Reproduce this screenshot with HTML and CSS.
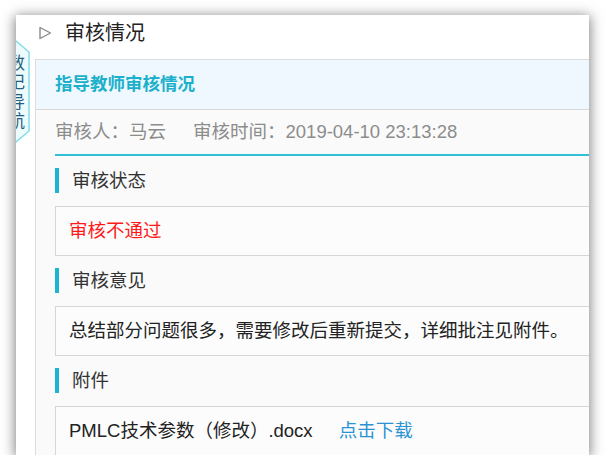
FILE: index.html
```html
<!DOCTYPE html>
<html lang="zh-CN">
<head>
<meta charset="utf-8">
<title>审核情况</title>
<link rel="stylesheet" href="styles.css">
</head>
<body>
<div class="window">
  <div class="title-row">
    <svg class="tri" width="14" height="14" viewBox="0 0 14 14"><path d="M2 1.5 L12.5 7 L2 12.5 Z" fill="none" stroke="#8a8a8a" stroke-width="1.4" stroke-linejoin="round"/></svg>
    <span class="title">审核情况</span>
  </div>
  <div class="panel">
    <div class="panel-head">指导教师审核情况</div>
    <div class="panel-body">
      <div class="info">审核人：马云<span class="gap">审核时间：2019-04-10 23:13:28</span></div>
      <div class="sec-title">审核状态</div>
      <div class="box"><span class="fail">审核不通过</span></div>
      <div class="sec-title">审核意见</div>
      <div class="box">总结部分问题很多，需要修改后重新提交，详细批注见附件。</div>
      <div class="sec-title">附件</div>
      <div class="box">PMLC技术参数（修改）.docx<a class="dl" href="#">点击下载</a></div>
    </div>
  </div>
  <div class="nav-tab">
    <svg class="tab-shape" width="30" height="104" viewBox="0 0 30 104"><polygon points="0,1 16,1 29,12 29,91 16,102 0,102" fill="#eefbfd" stroke="#86dbea" stroke-width="1.5"/></svg>
    <div class="tab-text">数记导航</div>
  </div>
</div>
</body>
</html>
```
FILE: styles.css
```css
html, body {
  margin: 0;
  padding: 0;
  background: #ffffff;
}
body {
  font-family: "Liberation Sans", "Noto Sans CJK SC", sans-serif;
  color: #222;
}
.window {
  position: relative;
  margin: 15px 0 0 16px;
  width: 573px;
  height: 440px;
  background: #ffffff;
  overflow: hidden;
  box-shadow: 0 2px 12px 1px rgba(0, 0, 0, 0.5);
}
.title-row {
  display: flex;
  align-items: center;
  height: 24px;
  padding: 6px 0 0 22px;
  margin-bottom: 14px;
}
.tri {
  display: block;
  margin-right: 13px;
}
.title {
  font-size: 20px;
  line-height: 24px;
  color: #222;
}
.panel {
  margin-left: 19px;
  width: 580px;
  height: 400px;
  border-left: 1px solid #dddddd;
  border-top: 1px solid #dddddd;
  background: #fafafa;
}
.panel-head {
  height: 49px;
  line-height: 49px;
  padding-left: 19px;
  background: #eef8fe;
  border-bottom: 1px solid #d8d8d8;
  color: #1cb0cb;
  font-size: 17.5px;
  font-weight: bold;
}
.panel-body {
  padding-left: 19px;
}
.info {
  height: 44px;
  line-height: 44px;
  border-bottom: 2px solid #2fc0d6;
  font-size: 18.5px;
  color: #8c8c8c;
}
.gap {
  margin-left: 27px;
}
.sec-title {
  margin: 12px 0 13px;
  height: 25px;
  line-height: 25px;
  border-left: 4px solid #1bb5cd;
  padding-left: 13px;
  font-size: 18.5px;
  color: #333;
}
.box {
  height: 48px;
  line-height: 48px;
  border: 1px solid #d6d6d6;
  border-right: none;
  background: #fcfcfc;
  padding-left: 13px;
  font-size: 18.5px;
  color: #222;
}
.fail {
  color: #ff1a1a;
}
.dl {
  margin-left: 26px;
  color: #2b92d4;
  text-decoration: none;
}
.nav-tab {
  position: absolute;
  left: -16px;
  top: 25px;
  width: 30px;
  height: 104px;
}
.tab-shape {
  position: absolute;
  left: 0;
  top: 0;
}
.tab-text {
  position: absolute;
  left: 8px;
  top: 14px;
  width: 17px;
  font-size: 17px;
  line-height: 19.3px;
  color: #24607d;
}
```
